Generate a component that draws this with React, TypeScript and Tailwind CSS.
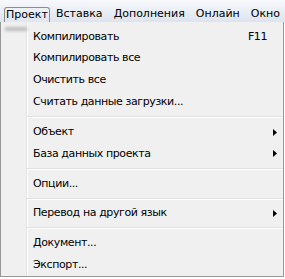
import React from 'react';

type Item =
  | { kind: 'item'; label: string; shortcut?: string; sub?: boolean }
  | { kind: 'sep' };

const items: Item[] = [
  { kind: 'item', label: 'Компилировать', shortcut: 'F11' },
  { kind: 'item', label: 'Компилировать все' },
  { kind: 'item', label: 'Очистить все' },
  { kind: 'item', label: 'Считать данные загрузки...' },
  { kind: 'sep' },
  { kind: 'item', label: 'Объект', sub: true },
  { kind: 'item', label: 'База данных проекта', sub: true },
  { kind: 'sep' },
  { kind: 'item', label: 'Опции...' },
  { kind: 'sep' },
  { kind: 'item', label: 'Перевод на другой язык', sub: true },
  { kind: 'sep' },
  { kind: 'item', label: 'Документ...' },
  { kind: 'item', label: 'Экспорт...' },
];

const menus = ['Проект', 'Вставка', 'Дополнения', 'Онлайн', 'Окно'];

function Arrow() {
  return (
    <svg width="4" height="7" viewBox="0 0 4 7" className="block">
      <path d="M0 0 L4 3.5 L0 7 Z" fill="#000" />
    </svg>
  );
}

export default function App() {
  return (
    <div
      className="w-[285px] h-[279px] bg-white overflow-hidden relative text-black"
      style={{ fontFamily: 'Tahoma, "DejaVu Sans", sans-serif' }}
    >
      {/* menubar */}
      <div className="h-[22px] bg-gradient-to-b from-[#f7f9fc] to-[#dde4ee] flex items-end text-[11px] whitespace-nowrap">
        {menus.map((m, i) => (
          <div
            key={m}
            className={
              i === 0
                ? 'ml-[4px] h-[15px] w-[46px] shrink-0 flex items-center justify-center border border-b-0 border-[#8d8d8d] rounded-t-[3px] bg-gradient-to-b from-[#eef2f8] to-[#dfe6f0]'
                : 'h-[15px] pl-[6px] pr-[5px] shrink-0 flex items-center'
            }
          >
            {m}
          </div>
        ))}
      </div>

      {/* dropdown */}
      <div className="w-[284px] h-[255px] bg-[#f0f0f0] border border-[#979797] border-t-0 relative flex text-[11px] tracking-[-0.4px]">
        <div className="absolute left-[4px] top-[5px] w-[22px] h-[4px] bg-[#bdbdbd] blur-[1.5px]" />
        <div className="w-[26px] shrink-0 border-r border-[#e2e3e3]" />
        <div className="w-px bg-white shrink-0" />
        <div className="flex-1 flex flex-col pt-[4px]">
          {items.map((it, i) =>
            it.kind === 'sep' ? (
              <div key={i} className="h-[8px] flex flex-col justify-center -ml-px">
                <div className="h-px bg-[#e0e0e0]" />
                <div className="h-px bg-white" />
              </div>
            ) : (
              <div key={i} className="h-[22px] flex items-center pl-[5px] pr-[6px]">
                <span className="flex-1">{it.label}</span>
                {it.shortcut && <span className="mr-[10px]">{it.shortcut}</span>}
                {it.sub && <Arrow />}
              </div>
            )
          )}
        </div>
      </div>
    </div>
  );
}
